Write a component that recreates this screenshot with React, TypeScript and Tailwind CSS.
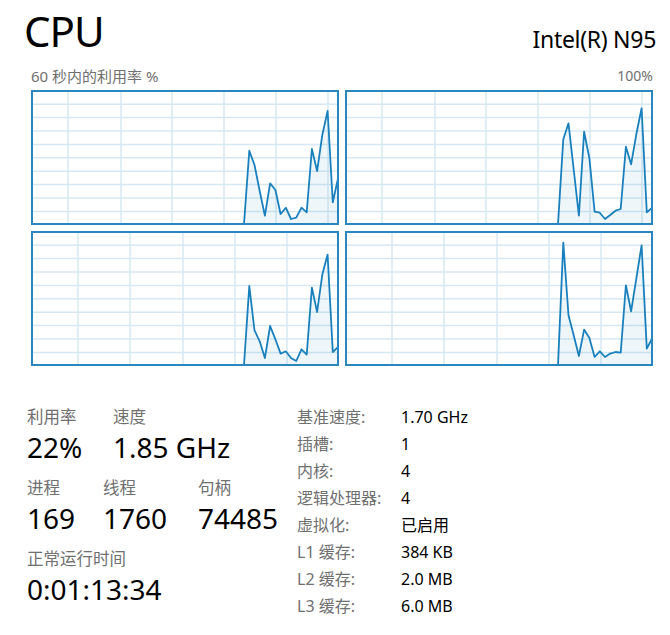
import React from "react";

const STEP = 5.22;
const W = 304;
const H = 131;

const graphs: { h: number[]; grid: number[] }[] = [
  {
    h: [0, 73.3, 59, 33, 8.3, 40.7, 34, 10, 16.3, 5, 6.3, 16.3, 11.7, 75, 53, 89, 113, 21.7, 45.7],
    grid: [35, 88, 139, 191, 243, 295],
  },
  {
    h: [0, 84.7, 100.7, 54.5, 8.3, 92.3, 65.7, 12.3, 11.3, 5, 9, 13.3, 15, 77.3, 59.7, 89.7, 115.7, 11.7, 16.3],
    grid: [35, 88, 139, 191, 243, 295],
  },
  {
    h: [0, 79, 34.7, 23.7, 7, 39, 25.7, 11.4, 13.7, 7, 4, 15.7, 10.4, 77.4, 53, 90.4, 110.4, 13, 18],
    grid: [45, 97, 150, 202, 254],
  },
  {
    h: [0, 122.4, 49.7, 29.7, 9, 35.4, 27, 8, 13.7, 8, 11.4, 13, 12.4, 79.7, 53.7, 86.4, 119.7, 16.4, 26.4],
    grid: [45, 97, 150, 202, 254],
  },
];

function Graph({ h, grid }: { h: number[]; grid: number[] }) {
  const n = h.length;
  const pts = h.map((v, i) => {
    const x = W + 1 - (n - 1 - i) * STEP;
    const y = H + 1 - v;
    return `${x.toFixed(1)},${y.toFixed(1)}`;
  });
  const line = [`0,${H + 1}`, ...pts].join(" ");
  const fill = [`0,${H + 1}`, ...pts, `${W + 1},${H + 1}`].join(" ");
  const rows = Array.from({ length: 9 }, (_, i) => (i + 1) * 13.4 - 1.2);
  return (
    <div className="w-[308px] h-[135px] border-2 border-[#2a86bf] bg-white">
      <svg width={W} height={H} viewBox={`0 0 ${W} ${H}`} className="block">
        {rows.map((y) => (
          <line key={"r" + y} x1={0} x2={W} y1={y} y2={y} stroke="#d6e8f3" strokeWidth={1.5} />
        ))}
        {grid.map((x) => (
          <line key={"c" + x} x1={x} x2={x} y1={0} y2={H} stroke="#d6e8f3" strokeWidth={1.5} />
        ))}
        <polygon points={fill} fill="#117dbb" fillOpacity={0.07} />
        <polyline points={line} fill="none" stroke="#1a80bd" strokeWidth={1.8} strokeLinejoin="round" />
      </svg>
    </div>
  );
}

function Stat({ label, value, w }: { label: string; value: string; w: string }) {
  return (
    <div className={w}>
      <div className="h-[22px] leading-[22px] text-[16.5px] text-[#707070]">{label}</div>
      <div className="mt-[1px] h-[36px] leading-[36px] text-[28px] text-black">{value}</div>
    </div>
  );
}

const specs: [string, string][] = [
  ["基准速度:", "1.70 GHz"],
  ["插槽:", "1"],
  ["内核:", "4"],
  ["逻辑处理器:", "4"],
  ["虚拟化:", "已启用"],
  ["L1 缓存:", "384 KB"],
  ["L2 缓存:", "2.0 MB"],
  ["L3 缓存:", "6.0 MB"],
];

export default function App() {
  return (
    <div className="w-[670px] h-[635px] bg-white overflow-hidden text-black font-['Noto_Sans','Noto_Sans_CJK_SC',sans-serif]">
      <div className="flex justify-between items-start pl-[24px] pr-[14px] h-[66px]">
        <div className="mt-[10px] text-[42px] leading-[42px] tracking-[-1px]">CPU</div>
        <div className="mt-[28px] text-[23px] leading-[23px] tracking-[-0.3px]">Intel(R) N95</div>
      </div>
      <div className="flex justify-between pl-[31px] pr-[17px] h-[20px] leading-[20px] text-[15px] text-[#707070]">
        <span>60 秒内的利用率 %</span>
        <span className="text-[14px]">100%</span>
      </div>
      <div className="mt-[4px] pl-[31px] grid grid-cols-[308px_308px] gap-[6px]">
        {graphs.map((g, i) => (
          <Graph key={i} h={g.h} grid={g.grid} />
        ))}
      </div>
      <div className="flex items-start pl-[27px]">
        <div className="w-[270px] mt-[40px] flex flex-col gap-[12px]">
          <div className="flex">
            <Stat label="利用率" value="22%" w="w-[86px]" />
            <Stat label="速度" value="1.85 GHz" w="w-[150px]" />
          </div>
          <div className="flex">
            <Stat label="进程" value="169" w="w-[76px]" />
            <Stat label="线程" value="1760" w="w-[95px]" />
            <Stat label="句柄" value="74485" w="w-[95px]" />
          </div>
          <div className="flex">
            <Stat label="正常运行时间" value="0:01:13:34" w="w-[200px]" />
          </div>
        </div>
        <div className="mt-[38px] grid grid-cols-[104px_auto] text-[16px] leading-[27px]">
          {specs.map(([k, v]) => (
            <React.Fragment key={k}>
              <div className="h-[27px] text-[#707070]">{k}</div>
              <div className="h-[27px] text-black">{v}</div>
            </React.Fragment>
          ))}
        </div>
      </div>
    </div>
  );
}
